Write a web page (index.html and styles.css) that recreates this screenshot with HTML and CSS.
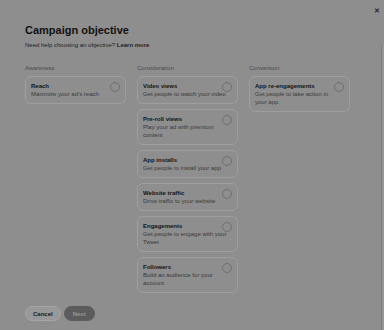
FILE: index.html
```html
<!DOCTYPE html>
<html lang="en">
<head>
    <meta charset="UTF-8">
    <title>Campaign objective</title>
    <link rel="stylesheet" href="styles.css">
</head>
<body>
    <div class="modal">
        <div class="panel">
            <div class="topbar">
                <span class="close">&#x2715;</span>
            </div>
            <h1 class="title">Campaign objective</h1>
            <p class="subtitle">Need help choosing an objective? <b>Learn more</b></p>

            <div class="columns">
                <div class="column">
                    <div class="heading">Awareness</div>
                    <div class="card">
                        <span class="radio"></span>
                        <div class="card-title">Reach</div>
                        <div class="card-desc">Maximize your ad's reach</div>
                    </div>
                </div>

                <div class="column">
                    <div class="heading">Consideration</div>
                    <div class="card">
                        <span class="radio"></span>
                        <div class="card-title">Video views</div>
                        <div class="card-desc">Get people to watch your video</div>
                    </div>
                    <div class="card">
                        <span class="radio"></span>
                        <div class="card-title">Pre-roll views</div>
                        <div class="card-desc">Play your ad with premium content</div>
                    </div>
                    <div class="card">
                        <span class="radio"></span>
                        <div class="card-title">App installs</div>
                        <div class="card-desc">Get people to install your app</div>
                    </div>
                    <div class="card">
                        <span class="radio"></span>
                        <div class="card-title">Website traffic</div>
                        <div class="card-desc">Drive traffic to your website</div>
                    </div>
                    <div class="card">
                        <span class="radio"></span>
                        <div class="card-title">Engagements</div>
                        <div class="card-desc">Get people to engage with your Tweet</div>
                    </div>
                    <div class="card">
                        <span class="radio"></span>
                        <div class="card-title">Followers</div>
                        <div class="card-desc">Build an audience for your account</div>
                    </div>
                </div>

                <div class="column">
                    <div class="heading">Conversion</div>
                    <div class="card">
                        <span class="radio"></span>
                        <div class="card-title">App re-engagements</div>
                        <div class="card-desc">Get people to take action in your app</div>
                    </div>
                </div>
            </div>

            <div class="buttons">
                <button class="button cancel">Cancel</button>
                <button class="button next">Next</button>
            </div>
        </div>
        <div class="scrollbar"></div>
    </div>
</body>
</html>
```

FILE: styles.css
```css
body {
    margin: 0;
    padding: 0;
    background-color: #8e8e8e;
    font-family: "Liberation Sans", Arial, sans-serif;
    color: #141414;
    height: 330px;
    overflow: hidden;
}

.modal {
    display: flex;
    height: 330px;
}

.panel {
    flex: 1;
    padding: 0 0 0 25px;
}

.topbar {
    display: flex;
    justify-content: flex-end;
    height: 23px;
    padding-top: 6px;
    box-sizing: border-box;
}

.close {
    font-size: 7px;
    line-height: 10px;
    color: #2a2a2a;
    font-weight: bold;
    margin-right: 1px;
}

.title {
    margin: 0;
    font-size: 11px;
    line-height: 14px;
    font-weight: bold;
    color: #111111;
}

.subtitle {
    margin: 4px 0 0 0;
    font-size: 6px;
    line-height: 8px;
    color: #222222;
}

.columns {
    display: grid;
    grid-template-columns: 101px 101px 101px;
    column-gap: 11px;
    margin-top: 15px;
    align-items: start;
}

.column {
    display: flex;
    flex-direction: column;
    gap: 5px;
}

.heading {
    font-size: 6px;
    line-height: 8px;
    color: #4a4a4a;
    margin-bottom: -1px;
}

.card {
    position: relative;
    border: 1px solid #9e9e9e;
    border-radius: 6px;
    padding: 5px 10px 5px 5px;
}

.column .card:first-of-type {
    margin-left: 1px;
}

.card-title {
    font-size: 6px;
    line-height: 8px;
    font-weight: bold;
    color: #141414;
}

.card-desc {
    font-size: 6px;
    line-height: 8px;
    color: #3a3a3a;
}

.radio {
    position: absolute;
    top: 5px;
    right: 5px;
    width: 8px;
    height: 8px;
    border: 1px solid #6f6f6f;
    border-radius: 50%;
}

.buttons {
    display: flex;
    gap: 3px;
    margin-top: 13px;
}

.button {
    height: 15px;
    padding: 0 7px;
    font-family: "Liberation Sans", Arial, sans-serif;
    font-size: 6px;
    font-weight: bold;
    border-radius: 8px;
    cursor: pointer;
}

.cancel {
    background-color: #989898;
    border: 1px solid #a6a6a6;
    color: #1a1a1a;
}

.next {
    background-color: #5c5c5c;
    border: 1px solid #5c5c5c;
    color: #959595;
    padding: 0 8px;
}

.scrollbar {
    width: 2px;
    margin-top: 45px;
    border-left: 1px solid #7c7c7c;
    background-color: #969696;
}
```
